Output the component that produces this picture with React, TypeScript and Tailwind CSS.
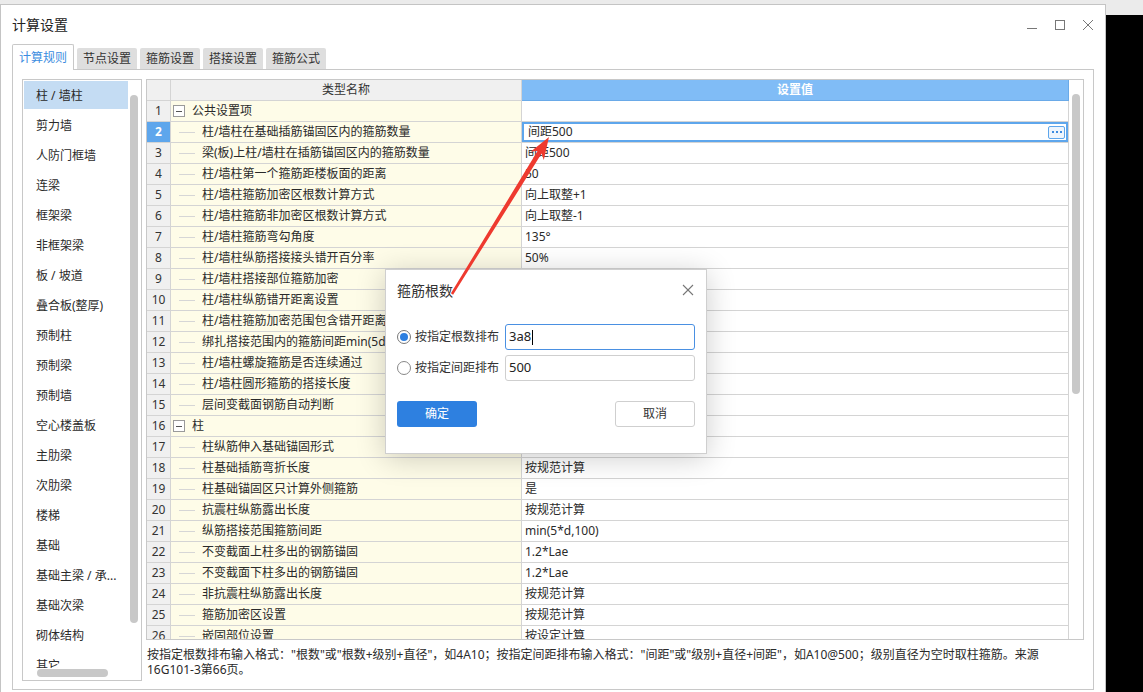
import React from "react";

type Row = { name: string; value: string; group?: boolean };

const rows: Row[] = [
  { name: "公共设置项", value: "", group: true },
  { name: "柱/墙柱在基础插筋锚固区内的箍筋数量", value: "间距500" },
  { name: "梁(板)上柱/墙柱在插筋锚固区内的箍筋数量", value: "间距500" },
  { name: "柱/墙柱第一个箍筋距楼板面的距离", value: "50" },
  { name: "柱/墙柱箍筋加密区根数计算方式", value: "向上取整+1" },
  { name: "柱/墙柱箍筋非加密区根数计算方式", value: "向上取整-1" },
  { name: "柱/墙柱箍筋弯勾角度", value: "135°" },
  { name: "柱/墙柱纵筋搭接接头错开百分率", value: "50%" },
  { name: "柱/墙柱搭接部位箍筋加密", value: "是" },
  { name: "柱/墙柱纵筋错开距离设置", value: "按规范计算" },
  { name: "柱/墙柱箍筋加密范围包含错开距离", value: "是" },
  { name: "绑扎搭接范围内的箍筋间距min(5d,100)", value: "是" },
  { name: "柱/墙柱螺旋箍筋是否连续通过", value: "是" },
  { name: "柱/墙柱圆形箍筋的搭接长度", value: "按规范计算" },
  { name: "层间变截面钢筋自动判断", value: "是" },
  { name: "柱", value: "", group: true },
  { name: "柱纵筋伸入基础锚固形式", value: "全部伸入基底弯折" },
  { name: "柱基础插筋弯折长度", value: "按规范计算" },
  { name: "柱基础锚固区只计算外侧箍筋", value: "是" },
  { name: "抗震柱纵筋露出长度", value: "按规范计算" },
  { name: "纵筋搭接范围箍筋间距", value: "min(5*d,100)" },
  { name: "不变截面上柱多出的钢筋锚固", value: "1.2*Lae" },
  { name: "不变截面下柱多出的钢筋锚固", value: "1.2*Lae" },
  { name: "非抗震柱纵筋露出长度", value: "按规范计算" },
  { name: "箍筋加密区设置", value: "按规范计算" },
  { name: "嵌固部位设置", value: "按设定计算" },
];

const listItems = [
  "柱 / 墙柱",
  "剪力墙",
  "人防门框墙",
  "连梁",
  "框架梁",
  "非框架梁",
  "板 / 坡道",
  "叠合板(整厚)",
  "预制柱",
  "预制梁",
  "预制墙",
  "空心楼盖板",
  "主肋梁",
  "次肋梁",
  "楼梯",
  "基础",
  "基础主梁 / 承...",
  "基础次梁",
  "砌体结构",
  "其它",
];

const tabs = ["节点设置", "箍筋设置", "搭接设置", "箍筋公式"];

function MinusBox() {
  return (
    <div className="w-[12px] h-[12px] border border-[#9a9a9a] bg-white flex items-center justify-center shrink-0">
      <div className="w-[6px] h-px bg-[#555]" />
    </div>
  );
}

export default function App() {
  return (
    <div className="w-[1143px] h-[692px] bg-black relative overflow-hidden font-['Noto_Sans','Noto_Sans_CJK_SC',sans-serif] text-[#2a2a2a]">
      <div className="flex h-full">
        {/* window */}
        <div className="w-[1106px] flex flex-col">
          <div className="h-[4px] bg-[#ebebeb]" />
          <div className="flex-1 bg-white border border-b-0 border-[#c4c4c4] flex flex-col">
            {/* title bar */}
            <div className="h-[39px] flex items-center pl-[11px]">
              <div className="text-[14px] leading-[20px] text-[#222]">计算设置</div>
              <div className="ml-auto flex items-center pr-[3px]">
                <div className="w-[28px] h-[28px] flex items-center justify-center">
                  <svg width="12" height="12" viewBox="0 0 12 12">
                    <line x1="1" y1="9.5" x2="11" y2="9.5" stroke="#777" strokeWidth="1" />
                  </svg>
                </div>
                <div className="w-[28px] h-[28px] flex items-center justify-center">
                  <svg width="12" height="12" viewBox="0 0 12 12">
                    <rect x="1.5" y="1.5" width="9" height="9" fill="none" stroke="#777" strokeWidth="1" />
                  </svg>
                </div>
                <div className="w-[28px] h-[28px] flex items-center justify-center">
                  <svg width="12" height="12" viewBox="0 0 12 12">
                    <line x1="1" y1="1" x2="11" y2="11" stroke="#777" strokeWidth="1" />
                    <line x1="11" y1="1" x2="1" y2="11" stroke="#777" strokeWidth="1" />
                  </svg>
                </div>
              </div>
            </div>
            {/* tabs */}
            <div className="h-[26px] flex items-end pl-[11px] relative z-10">
              <div className="w-[62px] h-[26px] bg-white border border-b-0 border-[#c8c8c8] rounded-t-[2px] flex items-center justify-center text-[12px] text-[#3b8de0]">
                计算规则
              </div>
              <div className="flex items-end gap-[3px] ml-[3px]">
                {tabs.map((t) => (
                  <div
                    key={t}
                    className="w-[60px] h-[21px] mb-px bg-[#dedede] rounded-t-[2px] flex items-center justify-center text-[12px] text-[#333]"
                  >
                    {t}
                  </div>
                ))}
              </div>
            </div>
            {/* panel */}
            <div className="-mt-px ml-[11px] w-[1082px] h-[621px] border border-[#c8c8c8] pl-[9px] pt-[9px] pr-[9px] pb-[8px] flex gap-[4px]">
              {/* left list */}
              <div className="w-[120px] h-[602px] border border-[#c8c8c8] flex flex-col">
                <div className="flex-1 flex min-h-0">
                  <div className="w-[106px] overflow-hidden px-px pt-px">
                    {listItems.map((it, i) => (
                      <div key={it} className="h-[30px]">
                        <div
                          className={
                            "h-[28px] pt-[2px] pl-[12px] flex items-center text-[12px] whitespace-nowrap " +
                            (i === 0 ? "bg-[#c4dcf3]" : "")
                          }
                        >
                          {it}
                        </div>
                      </div>
                    ))}
                  </div>
                  <div className="flex-1 pt-[15px] pl-[1px]">
                    <div className="w-[8px] h-[528px] rounded-full bg-[#c8c8c8]" />
                  </div>
                </div>
                <div className="h-[12px] pt-px pl-[14px]">
                  <div className="w-[71px] h-[8px] rounded-full bg-[#c8c8c8]" />
                </div>
              </div>
              {/* table column */}
              <div className="w-[938px] flex flex-col">
                <div className="h-[561px] border border-[#c8c8c8] flex overflow-hidden">
                  <div className="w-[922px] overflow-hidden text-[12px]">
                    {/* header */}
                    <div className="h-[21px] flex">
                      <div className="w-[24px] h-full bg-[#f0f0f0] border-r border-b border-[#d4d4d4]" />
                      <div className="w-[351px] h-full bg-[#f0f0f0] border-r border-b border-[#d4d4d4] flex items-center justify-center text-[#333]">
                        类型名称
                      </div>
                      <div className="w-[547px] h-full bg-[#80bcf6] border-b border-r border-[#6aaae8] flex items-center justify-center text-white font-semibold">
                        设置值
                      </div>
                    </div>
                    {rows.map((r, i) => {
                      const sel = i === 1;
                      return (
                        <div key={i} className="h-[21px] flex">
                          <div
                            className={
                              "w-[24px] h-full border-r border-b border-[#d4d4d4] flex items-center justify-center " +
                              (sel ? "bg-[#5ea6ec] text-white font-bold" : "bg-[#f0f0f0] text-[#333]")
                            }
                          >
                            {i + 1}
                          </div>
                          <div className="w-[351px] h-full bg-[#fefce8] border-r border-b border-[#d4d4d4] flex items-center whitespace-nowrap overflow-hidden">
                            {r.group ? (
                              <>
                                <div className="ml-[2px]">
                                  <MinusBox />
                                </div>
                                <span className="ml-[7px]">{r.name}</span>
                              </>
                            ) : (
                              <>
                                <div className="ml-[8px] w-[16px] h-px bg-[#d6d6d6] shrink-0" />
                                <span className="ml-[7px]">{r.name}</span>
                              </>
                            )}
                          </div>
                          <div
                            className={
                              "w-[547px] h-full bg-white border-r border-b border-[#d4d4d4] flex items-center whitespace-nowrap " +
                              (sel ? "shadow-[inset_0_0_0_2px_#5ea6ec] pl-[6px] pr-[3px]" : "pl-[3px]")
                            }
                          >
                            <span>{r.value}</span>
                            {sel && (
                              <div className="ml-auto w-[17px] h-[13px] rounded-[2px] border border-[#5ea6ec] bg-[#eef5fd] flex items-center justify-center gap-[2px]">
                                <div className="w-[2px] h-[2px] bg-[#3d8be0]" />
                                <div className="w-[2px] h-[2px] bg-[#3d8be0]" />
                                <div className="w-[2px] h-[2px] bg-[#3d8be0]" />
                              </div>
                            )}
                          </div>
                        </div>
                      );
                    })}
                  </div>
                  <div className="flex-1 pl-[3px] pt-[14px]">
                    <div className="w-[8px] h-[300px] rounded-full bg-[#c8c8c8]" />
                  </div>
                </div>
                <div className="pt-[7px] pl-[1px] text-[12px] leading-[15px] text-[#2a2a2a] whitespace-nowrap">
                  按指定根数排布输入格式："根数"或"根数+级别+直径"，如4A10；按指定间距排布输入格式："间距"或"级别+直径+间距"，如A10@500；级别直径为空时取柱箍筋。来源
                  <br />
                  16G101-3第66页。
                </div>
              </div>
            </div>
          </div>
        </div>
        {/* right outside */}
        <div className="flex-1 flex flex-col">
          <div className="h-[15px] bg-[#ebebeb]" />
          <div className="flex-1 bg-black" />
        </div>
      </div>

      {/* dialog */}
      <div className="absolute left-[385px] top-[269px] w-[322px] h-[185px] bg-white border border-[#cfcfcf] shadow-[0_4px_28px_rgba(0,0,0,0.2)] px-[11px] flex flex-col">
        <div className="h-[40px] flex items-center">
          <div className="text-[14px] text-[#333]">箍筋根数</div>
          <div className="ml-auto mr-[1px]">
            <svg width="12" height="12" viewBox="0 0 12 12">
              <line x1="1" y1="1" x2="11" y2="11" stroke="#777" strokeWidth="1.1" />
              <line x1="11" y1="1" x2="1" y2="11" stroke="#777" strokeWidth="1.1" />
            </svg>
          </div>
        </div>
        <div className="mt-[14px] flex items-center h-[26px]">
          <div className="w-[108px] flex items-center">
            <div className="w-[14px] h-[14px] rounded-full border border-[#777] bg-white flex items-center justify-center">
              <div className="w-[8px] h-[8px] rounded-full bg-[#2d7fe0]" />
            </div>
            <span className="ml-[4px] text-[12px] text-[#333]">按指定根数排布</span>
          </div>
          <div className="flex-1 h-full border border-[#4a90e2] rounded-[3px] flex items-center pl-[3px] text-[13px] text-[#222]">
            3a8<span className="inline-block w-px h-[15px] bg-black ml-px" />
          </div>
        </div>
        <div className="mt-[5px] flex items-center h-[26px]">
          <div className="w-[108px] flex items-center">
            <div className="w-[14px] h-[14px] rounded-full border border-[#888] bg-white" />
            <span className="ml-[4px] text-[12px] text-[#333]">按指定间距排布</span>
          </div>
          <div className="flex-1 h-full border border-[#cfcfcf] rounded-[3px] flex items-center pl-[3px] text-[13px] text-[#222]">
            500
          </div>
        </div>
        <div className="mt-[20px] flex items-center justify-between">
          <div className="w-[80px] h-[26px] rounded-[3px] bg-[#2e80e0] text-white text-[12px] flex items-center justify-center">
            确定
          </div>
          <div className="w-[80px] h-[26px] rounded-[3px] bg-white border border-[#cfcfcf] text-[#333] text-[12px] flex items-center justify-center">
            取消
          </div>
        </div>
      </div>

      {/* red arrow annotation */}
      <svg className="absolute left-0 top-0 pointer-events-none" width="1143" height="692" viewBox="0 0 1143 692">
        <polygon
          points="453.1,294.7 541.6,153.6 543.8,160.0 549,137 530.9,151.6 537.5,151.0 450.9,293.3"
          fill="#ee3a2f"
        />
      </svg>
    </div>
  );
}
